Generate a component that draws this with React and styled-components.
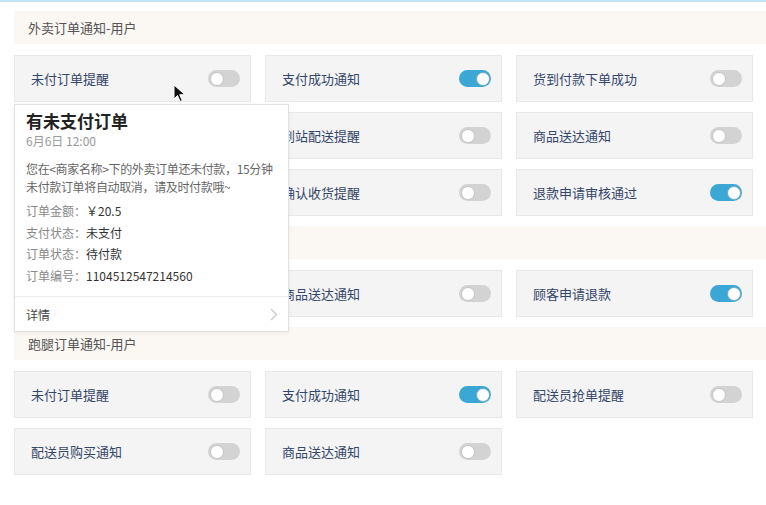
import React from 'react';
import styled, { createGlobalStyle } from 'styled-components';

const GlobalStyle = createGlobalStyle`
  html, body {
    margin: 0;
    padding: 0;
    background: #fff;
  }
  body {
    font-family: "Noto Sans CJK SC", "Noto Sans", sans-serif;
  }
`;

const Page = styled.div`
  position: relative;
  width: 766px;
  height: 505px;
  overflow: hidden;
  box-sizing: border-box;
  border-top: 2px solid #c3e4f3;
  padding: 9px 0 0 14px;
`;

const Section = styled.section`
  margin-bottom: 10px;
`;

const SectionTitle = styled.div`
  height: 33px;
  line-height: 33px;
  background: #fbf8f4;
  padding-left: 14px;
  margin-bottom: 11px;
  font-size: 13px;
  color: #555;
`;

const Grid = styled.div`
  display: grid;
  grid-template-columns: repeat(3, 237px);
  column-gap: 14px;
  row-gap: 10px;
`;

const Card = styled.div`
  height: 47px;
  box-sizing: border-box;
  display: flex;
  align-items: center;
  justify-content: space-between;
  padding: 0 10px 0 16px;
  background: #f4f4f4;
  border: 1px solid #e8e8e8;
  font-size: 13px;
  color: #34466a;
`;

const Toggle = styled.span`
  position: relative;
  width: 32px;
  height: 17px;
  border-radius: 9px;
  background: ${(p) => (p.$on ? '#3aa7d5' : '#d3d3d3')};
  flex-shrink: 0;

  &::after {
    content: '';
    position: absolute;
    top: 1.5px;
    left: ${(p) => (p.$on ? '16.5px' : '1.5px')};
    width: 14px;
    height: 14px;
    box-sizing: border-box;
    border-radius: 50%;
    background: #fff;
    border: 1px solid ${(p) => (p.$on ? '#6fa9c4' : '#c4c4c4')};
  }
`;

const Popup = styled.div`
  position: absolute;
  left: 14px;
  top: 102px;
  width: 275px;
  height: 228px;
  box-sizing: border-box;
  background: #fff;
  border: 1px solid #e2e2e2;
  box-shadow: 0 1px 4px rgba(0, 0, 0, 0.06);
  display: flex;
  flex-direction: column;
  z-index: 2;
`;

const PopupBody = styled.div`
  flex: 1;
  padding: 4px 11px 0 11px;
`;

const PopupTitle = styled.div`
  font-size: 17px;
  font-weight: 700;
  color: #222;
  line-height: 24px;
`;

const PopupDate = styled.div`
  font-size: 12px;
  color: #999;
  line-height: 15px;
  margin-bottom: 12px;
`;

const PopupText = styled.div`
  font-size: 12px;
  color: #666;
  line-height: 18px;
  margin-bottom: 4px;
  white-space: nowrap;
  letter-spacing: -0.35px;
`;

const InfoRow = styled.div`
  font-size: 12px;
  line-height: 21.5px;
  color: #888;
`;

const InfoValue = styled.span`
  color: #333;
`;

const PopupFooter = styled.div`
  height: 34px;
  border-top: 1px solid #ececec;
  display: flex;
  align-items: center;
  justify-content: space-between;
  padding: 0 10px 0 11px;
  font-size: 12px;
  color: #444;
`;

const Cursor = styled.svg`
  position: absolute;
  left: 173px;
  top: 82px;
  z-index: 3;
`;

const sections = [
  {
    title: '外卖订单通知-用户',
    items: [
      ['未付订单提醒', false],
      ['支付成功通知', true],
      ['货到付款下单成功', false],
      ['商家接单通知', false],
      ['到站配送提醒', false],
      ['商品送达通知', false],
      ['配送员接单通知', false],
      ['确认收货提醒', false],
      ['退款申请审核通过', true],
    ],
  },
  {
    title: '外卖订单通知-商家',
    items: [
      ['新订单提醒', false],
      ['商品送达通知', false],
      ['顾客申请退款', true],
    ],
  },
  {
    title: '跑腿订单通知-用户',
    items: [
      ['未付订单提醒', false],
      ['支付成功通知', true],
      ['配送员抢单提醒', false],
      ['配送员购买通知', false],
      ['商品送达通知', false],
    ],
  },
];

const info = [
  ['订单金额：', '￥20.5'],
  ['支付状态：', '未支付'],
  ['订单状态：', '待付款'],
  ['订单编号：', '1104512547214560'],
];

export default function App() {
  return (
    <>
      <GlobalStyle />
      <Page>
        {sections.map((s) => (
          <Section key={s.title}>
            <SectionTitle>{s.title}</SectionTitle>
            <Grid>
              {s.items.map(([label, on], i) => (
                <Card key={i}>
                  <span>{label}</span>
                  <Toggle $on={on} />
                </Card>
              ))}
            </Grid>
          </Section>
        ))}

        <Popup>
          <PopupBody>
            <PopupTitle>有未支付订单</PopupTitle>
            <PopupDate>6月6日 12:00</PopupDate>
            <PopupText>
              您在&lt;商家名称&gt;下的外卖订单还未付款，15分钟
              <br />
              未付款订单将自动取消，请及时付款哦~
            </PopupText>
            {info.map(([k, v]) => (
              <InfoRow key={k}>
                {k}
                <InfoValue>{v}</InfoValue>
              </InfoRow>
            ))}
          </PopupBody>
          <PopupFooter>
            <span>详情</span>
            <svg width="8" height="13" viewBox="0 0 8 13">
              <path d="M1 1l5.5 5.5L1 12" fill="none" stroke="#c8c8c8" strokeWidth="1.2" />
            </svg>
          </PopupFooter>
        </Popup>

        <Cursor width="14" height="19" viewBox="0 0 14 19">
          <path d="M1 1v14l3.5-3.5 2.6 6 2.2-1-2.6-5.8H12z" fill="#111" stroke="#fff" strokeWidth="1" />
        </Cursor>
      </Page>
    </>
  );
}
